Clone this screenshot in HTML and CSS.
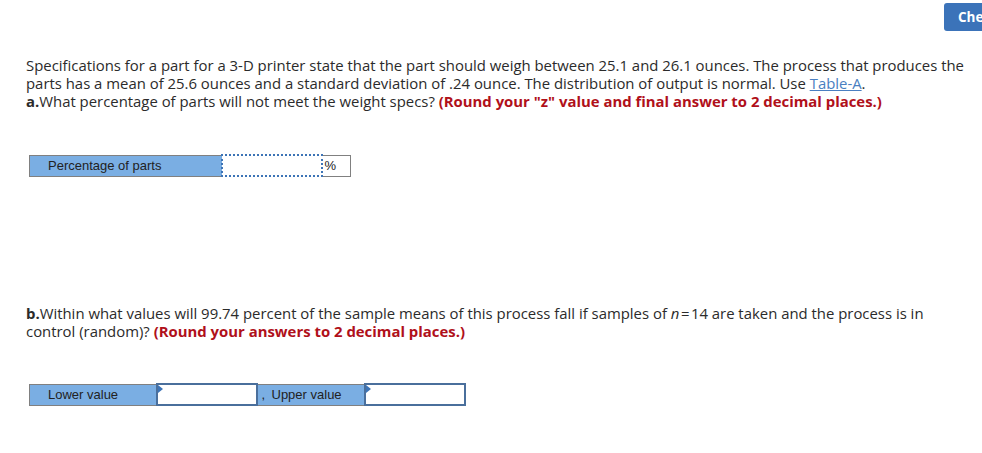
FILE: index.html
```html
<!DOCTYPE html>
<html>
<head>
<meta charset="utf-8">
<link rel="stylesheet" href="styles.css">
</head>
<body>
<div class="page">
  <div class="topbar">
    <button class="check">Check my work</button>
  </div>
  <div class="question">
    <p class="prompt">Specifications for a part for a 3-D printer state that the part should weigh between 25.1 and 26.1 ounces. The process that produces the<br>parts has a mean of 25.6 ounces and a standard deviation of .24 ounce. The distribution of output is normal. Use <a href="#" class="link">Table-A</a>.<br><b>a.</b>What percentage of parts will not meet the weight specs? <span class="note">(Round your "z" value and final answer to 2 decimal places.)</span></p>
    <table class="answers table-a">
      <tr>
        <td class="label w-a">Percentage of parts</td>
        <td class="input dotted w-in"></td>
        <td class="unit">%</td>
      </tr>
    </table>
    <p class="prompt part-b"><b>b.</b>Within what values will 99.74 percent of the sample means of this process fall if samples of <i class="var">n</i>&#8202;=&#8202;14 are taken and the process is in<br>control (random)? <span class="note">(Round your answers to 2 decimal places.)</span></p>
    <table class="answers table-b">
      <tr>
        <td class="label w-lower">Lower value</td>
        <td class="input solid w-in"><span class="flag"></span></td>
        <td class="label w-upper"><span class="comma">,</span>Upper value</td>
        <td class="input solid w-in"><span class="flag"></span></td>
      </tr>
    </table>
  </div>
</div>
</body>
</html>
```
FILE: styles.css
```css
html, body {
  margin: 0;
  padding: 0;
  background: #fff;
  overflow: hidden;
}
.page {
  width: 982px;
  height: 453px;
  overflow: hidden;
}
.topbar {
  display: flex;
  justify-content: flex-start;
  padding: 3px 0 0 944px;
  height: 28px;
}
.check {
  flex: none;
  height: 28px;
  padding: 0 14px;
  border: none;
  border-radius: 3px;
  background: #3b73b9;
  color: #fff;
  font-family: "Open Sans", sans-serif;
  font-weight: 700;
  font-size: 13.5px;
  white-space: nowrap;
  text-align: left;
}
.question {
  padding: 0 0 0 26px;
}
.prompt {
  margin: 25px 0 0 0;
  font-family: "Open Sans", "Liberation Sans", sans-serif;
  font-size: 14.9px;
  line-height: 18px;
  color: #2b2b2b;
  white-space: nowrap;
}
.prompt b {
  font-weight: 700;
}
.link {
  color: #4a7fc1;
  text-decoration: underline;
}
.note {
  color: #b0101a;
  font-weight: 700;
}
.var {
  font-style: italic;
}
.part-b {
  margin-top: 127px;
}
.answers {
  border-collapse: collapse;
  margin-left: 3px;
  font-family: "Liberation Sans", Arial, sans-serif;
  font-size: 13px;
  color: #222;
}
.table-a {
  margin-top: 44px;
}
.table-b {
  margin-top: 43px;
}
.answers td {
  height: 21px;
  padding: 0;
  border: 1px solid #808080;
  vertical-align: middle;
}
.label {
  background: #7aaee3;
  padding-left: 18px !important;
  box-sizing: border-box;
}
.w-a { width: 192px; }
.w-lower { width: 127px; }
.w-upper { width: 108px; padding-left: 4px !important; }
.w-in { width: 100px; }
.comma {
  display: inline-block;
  width: 10px;
}
.input {
  background: #fff;
  position: relative;
  box-sizing: border-box;
}
.answers td.dotted {
  border: 2px dotted #3d74b6;
}
.answers td.solid {
  border: 2px solid #4a6f9c;
}
.unit {
  width: 29px;
  padding-left: 2px !important;
  box-sizing: border-box;
}
.flag {
  position: absolute;
  left: 0;
  top: 0;
  width: 0;
  height: 0;
  border-top: 4px solid transparent;
  border-bottom: 4px solid transparent;
  border-left: 5px solid #3d74b6;
}
```
